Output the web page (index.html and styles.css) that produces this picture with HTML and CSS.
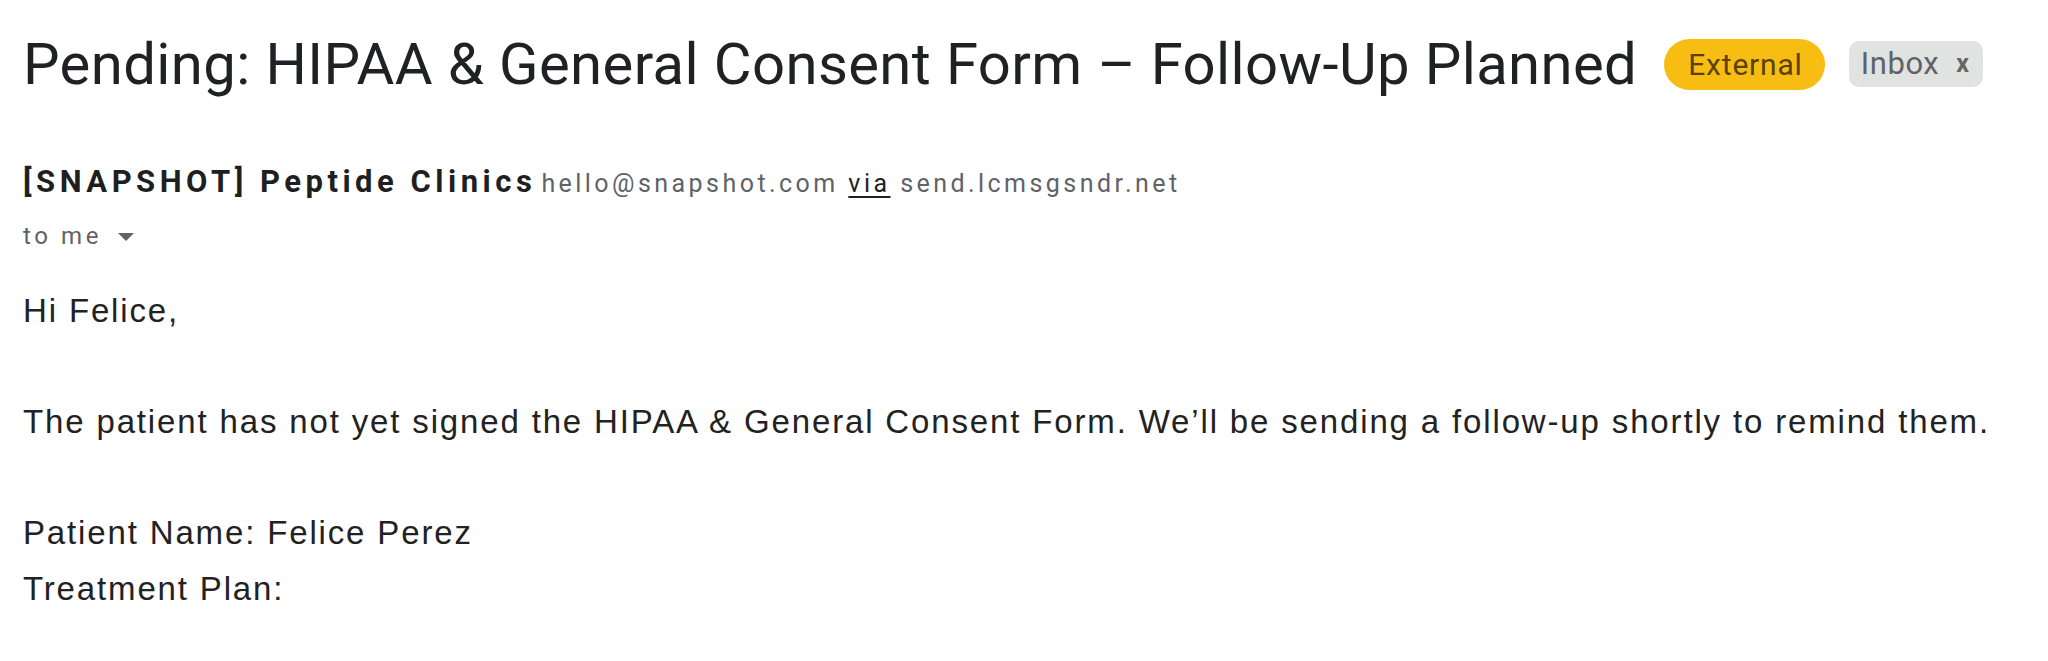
FILE: index.html
```html
<!DOCTYPE html>
<html lang="en">
<head>
<meta charset="utf-8">
<title>Pending: HIPAA &amp; General Consent Form</title>
<link rel="stylesheet" href="styles.css">
</head>
<body>
<div class="mail">
  <div class="subject-row">
    <h1 class="subject">Pending: HIPAA &amp; General Consent Form – Follow-Up Planned</h1>
    <span class="tag-external">External</span>
    <span class="tag-inbox">Inbox<span class="tag-x">x</span></span>
  </div>
  <div class="sender-row"><span class="sender-name">[SNAPSHOT] Peptide Clinics</span><span class="sender-addr">hello@snapshot.com <span class="via">via</span> send.lcmsgsndr.net</span></div>
  <div class="to-row">
    <span>to me</span>
    <svg class="caret" width="16" height="8" viewBox="0 0 16 8"><path d="M0 0 L16 0 L8 8 Z" fill="#5f6368"/></svg>
  </div>
  <div class="body">
    <p>Hi Felice,</p>
    <p>The patient has not yet signed the HIPAA &amp; General Consent Form. We’ll be sending a follow-up shortly to remind them.</p>
    <p>Patient Name: Felice Perez<br>Treatment Plan:</p>
  </div>
</div>
</body>
</html>
```
FILE: styles.css
```css
html, body {
  margin: 0;
  padding: 0;
  background: #ffffff;
}

.mail {
  padding: 30px 0 0 23px;
  font-family: Roboto, "Liberation Sans", sans-serif;
}

.subject-row {
  display: flex;
  align-items: center;
  height: 68px;
}

.subject {
  margin: 0;
  font-family: Roboto, sans-serif;
  font-weight: 400;
  font-size: 58px;
  line-height: 68px;
  letter-spacing: 0.4px;
  color: #202124;
  white-space: nowrap;
}

.tag-external {
  margin-left: 27px;
  height: 51px;
  box-sizing: border-box;
  padding: 0 22px 0 24px;
  border-radius: 26px;
  background: #f8bd12;
  color: #594200;
  font-size: 30px;
  font-weight: 400;
  line-height: 51px;
  letter-spacing: 0.8px;
}

.tag-inbox {
  margin-left: 24px;
  height: 46px;
  box-sizing: border-box;
  padding: 0 13px 0 12px;
  border-radius: 10px;
  background: #e1e3e1;
  color: #5f6368;
  font-size: 31px;
  line-height: 46px;
  letter-spacing: 0.6px;
  display: flex;
  align-items: center;
}

.tag-x {
  margin-left: 17px;
  font-size: 25px;
  font-weight: 700;
  color: #666666;
}

.sender-row {
  margin-top: 68px;
  line-height: 32px;
  white-space: nowrap;
}

.sender-name {
  font-weight: 700;
  font-size: 31px;
  letter-spacing: 4.5px;
  color: #1f1f1f;
}

.sender-addr {
  margin-left: 5px;
  font-size: 25px;
  letter-spacing: 3.45px;
  color: #5f6368;
}

.via {
  color: #1f1f1f;
  text-decoration: underline;
  text-underline-offset: 4px;
}

.to-row {
  margin-top: 19px;
  height: 28px;
  display: flex;
  align-items: center;
  font-size: 24px;
  line-height: 28px;
  letter-spacing: 3.6px;
  color: #5f6368;
}

.caret {
  margin-left: 16px;
  margin-top: 2px;
}

.body {
  margin-top: 33px;
  font-family: "Liberation Sans", Arial, sans-serif;
  font-size: 33px;
  line-height: 55.5px;
  letter-spacing: 1.85px;
  color: #222222;
}

.body p {
  margin: 0 0 55.5px 0;
}
```
